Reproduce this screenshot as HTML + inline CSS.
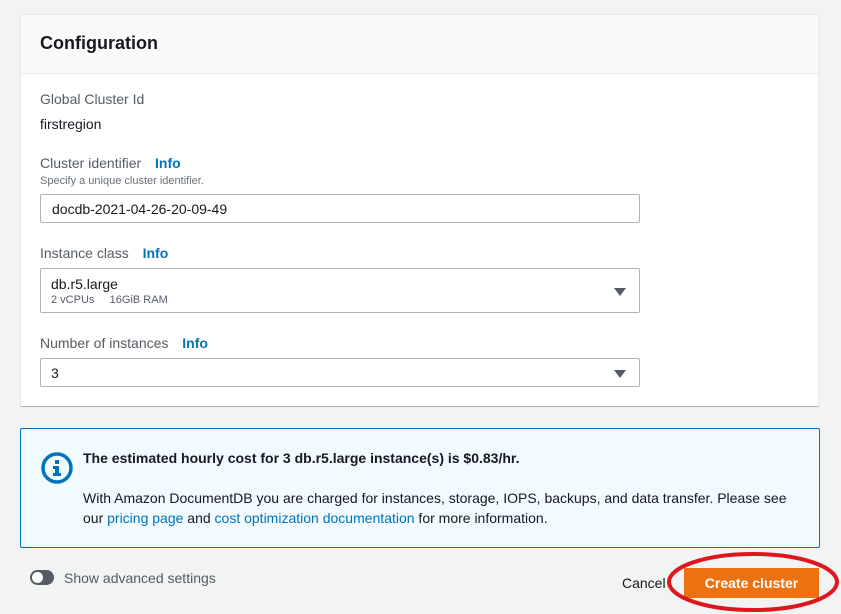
<!DOCTYPE html>
<html><head><style>
body{margin:0;width:841px;height:614px;background:#f2f3f3;font-family:"Liberation Sans",Arial,sans-serif;color:#16191f;position:relative;overflow:hidden}
.a{position:absolute;white-space:nowrap}
.card{position:absolute;left:20px;top:14px;width:799px;height:393px;background:#fff;border:1px solid #e5e7e8;border-bottom:1px solid #aab7b8;box-sizing:border-box}
.hdr{position:absolute;left:0;top:0;right:0;height:58px;background:#fafafa;border-bottom:1px solid #eaeded}
.lbl{font-size:14px;color:#545b64}
.info{color:#0073bb;font-weight:bold;font-size:14px}
.inp{position:absolute;left:40px;width:600px;border:1px solid #aab7b8;border-radius:2px;box-sizing:border-box;background:#fff}
.tri{position:absolute;right:13px;width:0;height:0;border-left:6px solid transparent;border-right:6px solid transparent;border-top:8px solid #545b64}
</style></head><body>
<div class="card"><div class="hdr"></div></div>
<div class="a" style="left:40px;top:33px;font-size:18px;font-weight:bold">Configuration</div>
<div class="a lbl" style="left:40px;top:91px">Global Cluster Id</div>
<div class="a" style="left:40px;top:116px;font-size:14px">firstregion</div>
<div class="a lbl" style="left:40px;top:155px">Cluster identifier <span class="info" style="margin-left:10px">Info</span></div>
<div class="a" style="left:40px;top:175px;font-size:11px;color:#687078">Specify a unique cluster identifier.</div>
<div class="inp" style="top:194px;height:29px"><div class="a" style="left:11px;top:6px;font-size:14px">docdb-2021-04-26-20-09-49</div></div>
<div class="a lbl" style="left:40px;top:245px">Instance class <span class="info" style="margin-left:10px">Info</span></div>
<div class="inp" style="top:268px;height:45px"><div class="a" style="left:10px;top:7px;font-size:14px">db.r5.large</div><div class="a" style="left:10px;top:25px;font-size:11px;color:#545b64">2 vCPUs&nbsp;&nbsp;&nbsp;&nbsp;&nbsp;16GiB RAM</div><div class="tri" style="top:19px"></div></div>
<div class="a lbl" style="left:40px;top:335px">Number of instances <span class="info" style="margin-left:10px">Info</span></div>
<div class="inp" style="top:358px;height:29px"><div class="a" style="left:10px;top:6px;font-size:14px">3</div><div class="tri" style="top:11px"></div></div>
<div style="position:absolute;left:20px;top:428px;width:800px;height:120px;background:#f1faff;border:1px solid #0073bb;border-radius:2px;box-sizing:border-box"></div>
<svg class="a" style="left:40px;top:451px" width="34" height="34" viewBox="0 0 34 34"><circle cx="17" cy="17" r="14" fill="none" stroke="#0073bb" stroke-width="3.5"/><rect x="15" y="9" width="4" height="4" fill="#0073bb"/><path d="M13 15h6v7h2v3h-8v-3h2v-4h-2z" fill="#0073bb"/></svg>
<div class="a" style="left:83px;top:450px;font-size:14px;font-weight:bold">The estimated hourly cost for 3 db.r5.large instance(s) is $0.83/hr.</div>
<div class="a" style="left:83px;top:490px;font-size:14px">With Amazon DocumentDB you are charged for instances, storage, IOPS, backups, and data transfer. Please see</div>
<div class="a" style="left:83px;top:510px;font-size:14px">our <span style="color:#0073bb">pricing page</span> and <span style="color:#0073bb">cost optimization documentation</span> for more information.</div>
<div class="a" style="left:30px;top:570px;width:24px;height:15px;border-radius:8px;background:#545b64"></div>
<div class="a" style="left:32px;top:572px;width:11px;height:11px;border-radius:6px;background:#fff"></div>
<div class="a" style="left:64px;top:570px;font-size:14px;color:#545b64">Show advanced settings</div>
<div class="a" style="left:622px;top:575px;font-size:14px">Cancel</div>
<div class="a" style="left:684px;top:568px;width:135px;height:30px;background:#ec7211;color:#fff;font-weight:bold;font-size:14px;text-align:center;line-height:30px">Create cluster</div>
<svg class="a" style="left:666px;top:551px" width="174" height="62"><ellipse cx="87" cy="31" rx="84" ry="28" fill="none" stroke="#e0161e" stroke-width="4"/></svg>
</body></html>
